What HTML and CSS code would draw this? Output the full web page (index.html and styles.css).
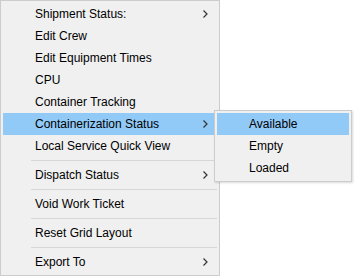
FILE: index.html
```html
<!DOCTYPE html>
<html lang="en">
<head>
    <meta charset="UTF-8">
    <meta name="viewport" content="width=device-width, initial-scale=1.0">
    <title>Context Menu</title>
    <link rel="stylesheet" href="styles.css">
</head>
<body>
    <div class="screen">
        <ul class="menu">
            <li class="item">Shipment Status:<svg class="arrow" width="5" height="8" viewBox="0 0 5 8"><path d="M0.5 0.5 L4 4 L0.5 7.5" fill="none" stroke="#333" stroke-width="1.2"/></svg></li>
            <li class="item">Edit Crew</li>
            <li class="item">Edit Equipment Times</li>
            <li class="item">CPU</li>
            <li class="item">Container Tracking</li>
            <li class="item active">Containerization Status<svg class="arrow" width="5" height="8" viewBox="0 0 5 8"><path d="M0.5 0.5 L4 4 L0.5 7.5" fill="none" stroke="#333" stroke-width="1.2"/></svg></li>
            <li class="item">Local Service Quick View</li>
            <li class="separator"></li>
            <li class="item">Dispatch Status<svg class="arrow" width="5" height="8" viewBox="0 0 5 8"><path d="M0.5 0.5 L4 4 L0.5 7.5" fill="none" stroke="#333" stroke-width="1.2"/></svg></li>
            <li class="separator"></li>
            <li class="item">Void Work Ticket</li>
            <li class="separator"></li>
            <li class="item">Reset Grid Layout</li>
            <li class="separator"></li>
            <li class="item">Export To<svg class="arrow" width="5" height="8" viewBox="0 0 5 8"><path d="M0.5 0.5 L4 4 L0.5 7.5" fill="none" stroke="#333" stroke-width="1.2"/></svg></li>
        </ul>

        <ul class="menu submenu">
            <li class="item active">Available</li>
            <li class="item">Empty</li>
            <li class="item">Loaded</li>
        </ul>
    </div>
</body>
</html>
```

FILE: styles.css
```css
*{
    margin: 0;
    padding: 0;
    box-sizing: border-box;
}

body{
    background-color: #ffffff;
    font-family: 'Liberation Sans', Arial, sans-serif;
    font-size: 12px;
    color: #000000;
}

.screen{
    position: relative;
    width: 360px;
    height: 276px;
}

.menu{
    list-style: none;
    width: 220px;
    background-color: #f0f0f0;
    border: 1px solid #cccccc;
    padding: 2px;
}

.item{
    display: flex;
    align-items: center;
    justify-content: space-between;
    height: 22px;
    padding-left: 32px;
    padding-right: 9px;
    white-space: nowrap;
}

.item.active{
    background-color: #91c9f7;
}

.arrow{
    display: block;
}

.separator{
    height: 7px;
    display: flex;
    align-items: center;
    padding-left: 28px;
}

.separator::after{
    content: '';
    display: block;
    width: 100%;
    height: 1px;
    background-color: #d7d7d7;
}

/* popup that opens next to the highlighted row */
.submenu{
    position: absolute;
    left: 214px;
    top: 110px;
    width: 138px;
    box-shadow: 1px 1px 2px rgba(0,0,0,0.15);
}
```
